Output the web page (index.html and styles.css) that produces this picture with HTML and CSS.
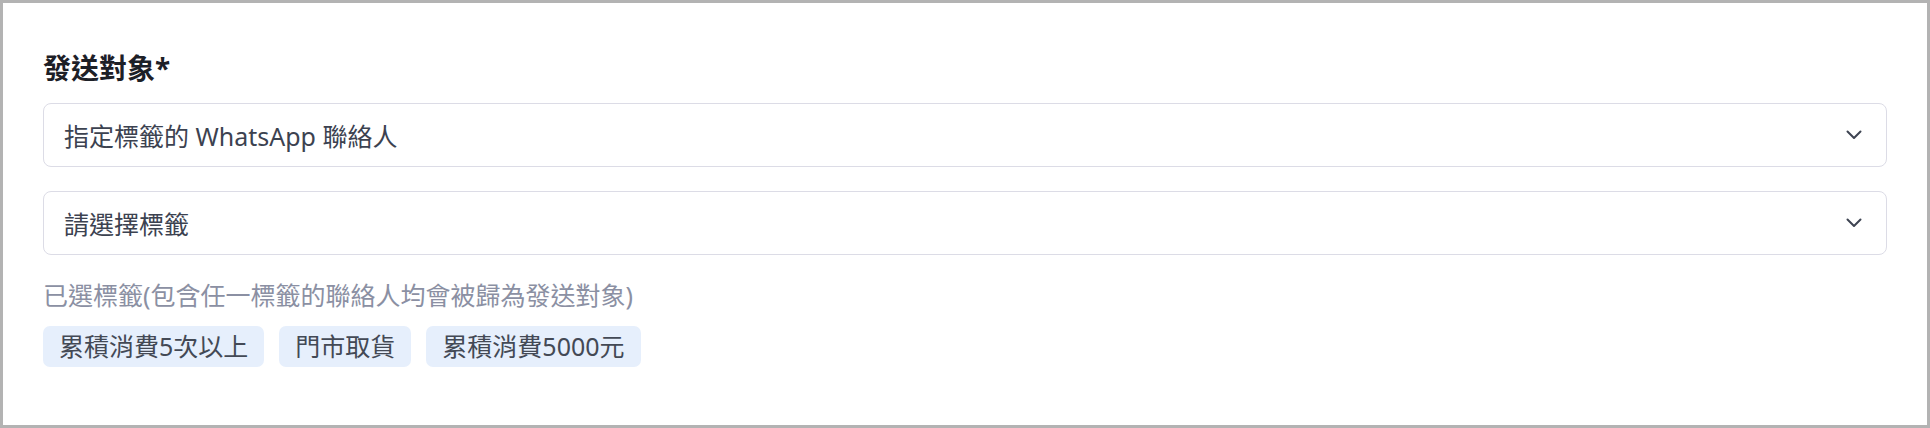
FILE: index.html
```html
<!DOCTYPE html>
<html lang="zh-Hant">
<head>
    <meta charset="UTF-8">
    <meta name="viewport" content="width=device-width, initial-scale=1.0">
    <title>發送對象</title>
    <link rel="stylesheet" href="styles.css">
</head>
<body>
    <div class="panel">
        <h2 class="field-title">發送對象*</h2>

        <div class="select-box">
            <span class="select-text">指定標籤的 WhatsApp 聯絡人</span>
            <svg class="chevron" width="16" height="10" viewBox="0 0 16 10">
                <polyline points="1.5,1.5 8,8 14.5,1.5" fill="none" stroke="#3e4452" stroke-width="2" stroke-linecap="round" stroke-linejoin="round"/>
            </svg>
        </div>

        <div class="select-box">
            <span class="select-text">請選擇標籤</span>
            <svg class="chevron" width="16" height="10" viewBox="0 0 16 10">
                <polyline points="1.5,1.5 8,8 14.5,1.5" fill="none" stroke="#3e4452" stroke-width="2" stroke-linecap="round" stroke-linejoin="round"/>
            </svg>
        </div>

        <p class="hint">已選標籤(包含任一標籤的聯絡人均會被歸為發送對象)</p>

        <div class="tag-list">
            <span class="tag">累積消費5次以上</span>
            <span class="tag">門市取貨</span>
            <span class="tag">累積消費5000元</span>
        </div>
    </div>
</body>
</html>
```

FILE: styles.css
```css
/* 發送對象 */
body {
    margin: 0;
    font-family: "Noto Sans", "Noto Sans CJK TC", sans-serif;
    background: #ffffff;
}

.panel {
    box-sizing: border-box;
    width: 1930px;
    height: 428px;
    border: 3px solid #b3b3b3;
    padding: 47px 40px 0 40px;
}

.field-title {
    margin: 0 0 17px 0;
    font-size: 28px;
    line-height: 36px;
    font-weight: 700;
    color: #1d2027;
}

.select-box {
    box-sizing: border-box;
    height: 64px;
    border: 1px solid #dcdce6;
    border-radius: 8px;
    padding: 0 24px 0 20px;
    margin-bottom: 24px;
    display: flex;
    align-items: center;
    justify-content: space-between;
}

.select-text {
    font-size: 25px;
    color: #3c4250;
}

.hint {
    margin: 1px 0 15px 0;
    font-size: 25px;
    line-height: 32px;
    color: #8b90a3;
}

.tag-list {
    display: flex;
    gap: 15px;
}

.tag {
    height: 41px;
    line-height: 41px;
    padding: 0 16px;
    border-radius: 7px;
    background: #e6effc;
    color: #434955;
    font-size: 25px;
}
```
